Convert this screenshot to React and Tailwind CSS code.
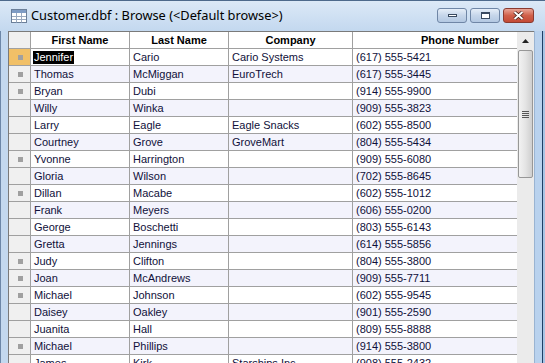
import React from 'react';

const rows = [
  ['Jennifer', 'Cario', 'Cario Systems', '(617) 555-5421', true],
  ['Thomas', 'McMiggan', 'EuroTrech', '(617) 555-3445', true],
  ['Bryan', 'Dubi', '', '(914) 555-9900', true],
  ['Willy', 'Winka', '', '(909) 555-3823', false],
  ['Larry', 'Eagle', 'Eagle Snacks', '(602) 555-8500', false],
  ['Courtney', 'Grove', 'GroveMart', '(804) 555-5434', false],
  ['Yvonne', 'Harrington', '', '(909) 555-6080', true],
  ['Gloria', 'Wilson', '', '(702) 555-8645', false],
  ['Dillan', 'Macabe', '', '(602) 555-1012', true],
  ['Frank', 'Meyers', '', '(606) 555-0200', false],
  ['George', 'Boschetti', '', '(803) 555-6143', false],
  ['Gretta', 'Jennings', '', '(614) 555-5856', false],
  ['Judy', 'Clifton', '', '(804) 555-3800', true],
  ['Joan', 'McAndrews', '', '(909) 555-7711', true],
  ['Michael', 'Johnson', '', '(602) 555-9545', true],
  ['Daisey', 'Oakley', '', '(901) 555-2590', false],
  ['Juanita', 'Hall', '', '(809) 555-8888', false],
  ['Michael', 'Phillips', '', '(914) 555-3800', true],
  ['James', 'Kirk', 'Starships Inc', '(908) 555-2432', false],
];

const TableIcon = () => (
  <svg width="16" height="14" viewBox="0 0 16 14">
    <rect x="0.5" y="0.5" width="15" height="13" fill="#fff" stroke="#6b7f99" />
    <rect x="1" y="1" width="14" height="3" fill="#7f9cc4" />
    <path d="M1 7.5h14M1 10.5h14M5.5 4v9.5M10.5 4v9.5" stroke="#9aaac0" />
  </svg>
);

const WinButton = ({ kind }) => {
  const close = kind === 'close';
  return (
    <div
      className={
        'h-[15px] flex items-center justify-center rounded-[3px] border ' +
        (close
          ? 'w-[31px] border-[#8a3a2f] bg-gradient-to-b from-[#e8a597] via-[#d0604a] to-[#c44a36]'
          : 'w-[30px] border-[#6f86a6] bg-gradient-to-b from-[#e6eef8] via-[#c6d6ea] to-[#b3c8e2]')
      }
    >
      {kind === 'min' && <div className="w-[9px] h-[3px] bg-white border border-[#3a4a60]" />}
      {kind === 'max' && <div className="w-[9px] h-[7px] bg-white border border-[#3a4a60] border-t-[2px]" />}
      {close && (
        <svg width="11" height="9" viewBox="0 0 11 9">
          <path d="M1.5 1l8 7M9.5 1l-8 7" stroke="#3b1a14" strokeWidth="3.4" />
          <path d="M1.5 1l8 7M9.5 1l-8 7" stroke="#fff" strokeWidth="2" />
        </svg>
      )}
    </div>
  );
};

export default function App() {
  return (
    <div
      className="w-[545px] h-[363px] overflow-hidden flex flex-col bg-[#c3d8ef] border-t border-[#4e6a8c]"
      style={{ fontFamily: '"Liberation Sans", Arial, sans-serif' }}
    >
      <div className="h-[30px] flex items-center pl-[11px] pr-[11px] bg-gradient-to-b from-[#dce9f7] to-[#c3d8ef]">
        <TableIcon />
        <span
          className="ml-[4px] text-[12.8px] text-black"
          style={{ fontFamily: '"Noto Sans", "Open Sans", sans-serif' }}
        >
          Customer.dbf : Browse (&lt;Default browse&gt;)
        </span>
        <div className="ml-auto flex items-start gap-[3px] -mt-[2px]">
          <WinButton kind="min" />
          <WinButton kind="max" />
          <WinButton kind="close" />
        </div>
      </div>

      <div className="flex flex-1 min-h-0">
        <div className="w-[8px] bg-[#c3d8ef] border-l border-[#6d87a8]" />
        <div className="w-[509px] overflow-hidden bg-white border-l border-t border-[#7a7a7a] text-[11px] text-[#10103a]">
          <div className="flex h-[17px] border-b border-[#a0a0a0] bg-white font-bold text-black whitespace-nowrap">
            <div className="w-[22px] shrink-0 border-r border-[#a0a0a0] bg-[#f0f0f0]" />
            <div className="w-[99px] shrink-0 border-r border-[#a0a0a0] text-center leading-[16px]">First Name</div>
            <div className="w-[99px] shrink-0 border-r border-[#a0a0a0] text-center leading-[16px]">Last Name</div>
            <div className="w-[124px] shrink-0 border-r border-[#a0a0a0] text-center leading-[16px]">Company</div>
            <div className="w-[214px] shrink-0 text-center leading-[16px]">Phone Number</div>
          </div>
          {rows.map((r, i) => (
            <div
              key={i}
              className={
                'flex h-[17px] border-b border-[#a0a0a0] whitespace-nowrap ' +
                (i % 2 === 1 ? 'bg-[#f3f3fc]' : 'bg-white')
              }
            >
              <div
                className={
                  'w-[22px] shrink-0 border-r border-[#a0a0a0] flex items-center justify-center ' +
                  (i === 0 ? 'bg-[#f1c067]' : 'bg-[#f0f0f0]')
                }
              >
                {r[4] && <div className="w-[5px] h-[5px] bg-[#a0a0a0] ml-[2px]" />}
              </div>
              <div className="w-[99px] shrink-0 border-r border-[#a0a0a0] pl-[2px] leading-[16px]">
                {i === 0 ? (
                  <span className="bg-black text-white pl-[1px] pr-[1px] inline-block leading-[13px] mt-[1px]">{r[0]}</span>
                ) : (
                  <span className="pl-[1px]">{r[0]}</span>
                )}
              </div>
              <div className="w-[99px] shrink-0 border-r border-[#a0a0a0] pl-[3px] leading-[16px]">{r[1]}</div>
              <div className="w-[124px] shrink-0 border-r border-[#a0a0a0] pl-[3px] leading-[16px]">{r[2]}</div>
              <div className="w-[214px] shrink-0 pl-[3px] leading-[16px]">{r[3]}</div>
            </div>
          ))}
        </div>

        <div className="w-[17px] bg-[#ebebeb] border-t border-[#7a7a7a] flex flex-col items-center">
          <div className="h-[17px] w-full flex items-center justify-center">
            <svg width="7" height="4" viewBox="0 0 7 4">
              <path d="M3.5 0L7 4H0z" fill="#222" />
            </svg>
          </div>
          <div className="mt-[1px] w-[15px] h-[128px] rounded-[2px] border border-[#979797] bg-gradient-to-r from-[#f2f2f2] via-[#e4e4e4] to-[#cfcfcf] flex flex-col items-center justify-center gap-[1px]">
            <div className="w-[7px] h-[1px] bg-[#555]" />
            <div className="w-[7px] h-[1px] bg-[#555]" />
            <div className="w-[7px] h-[1px] bg-[#555]" />
            <div className="w-[7px] h-[1px] bg-[#555]" />
          </div>
        </div>
        <div className="w-[11px] flex">
          <div className="w-[1px] bg-[#9ab4d2]" />
          <div className="w-[7px] bg-[#b9d2ee]" />
          <div className="w-[1px] bg-[#1e3f66]" />
          <div className="w-[2px] bg-[#a9c4e4]" />
        </div>
      </div>
    </div>
  );
}
